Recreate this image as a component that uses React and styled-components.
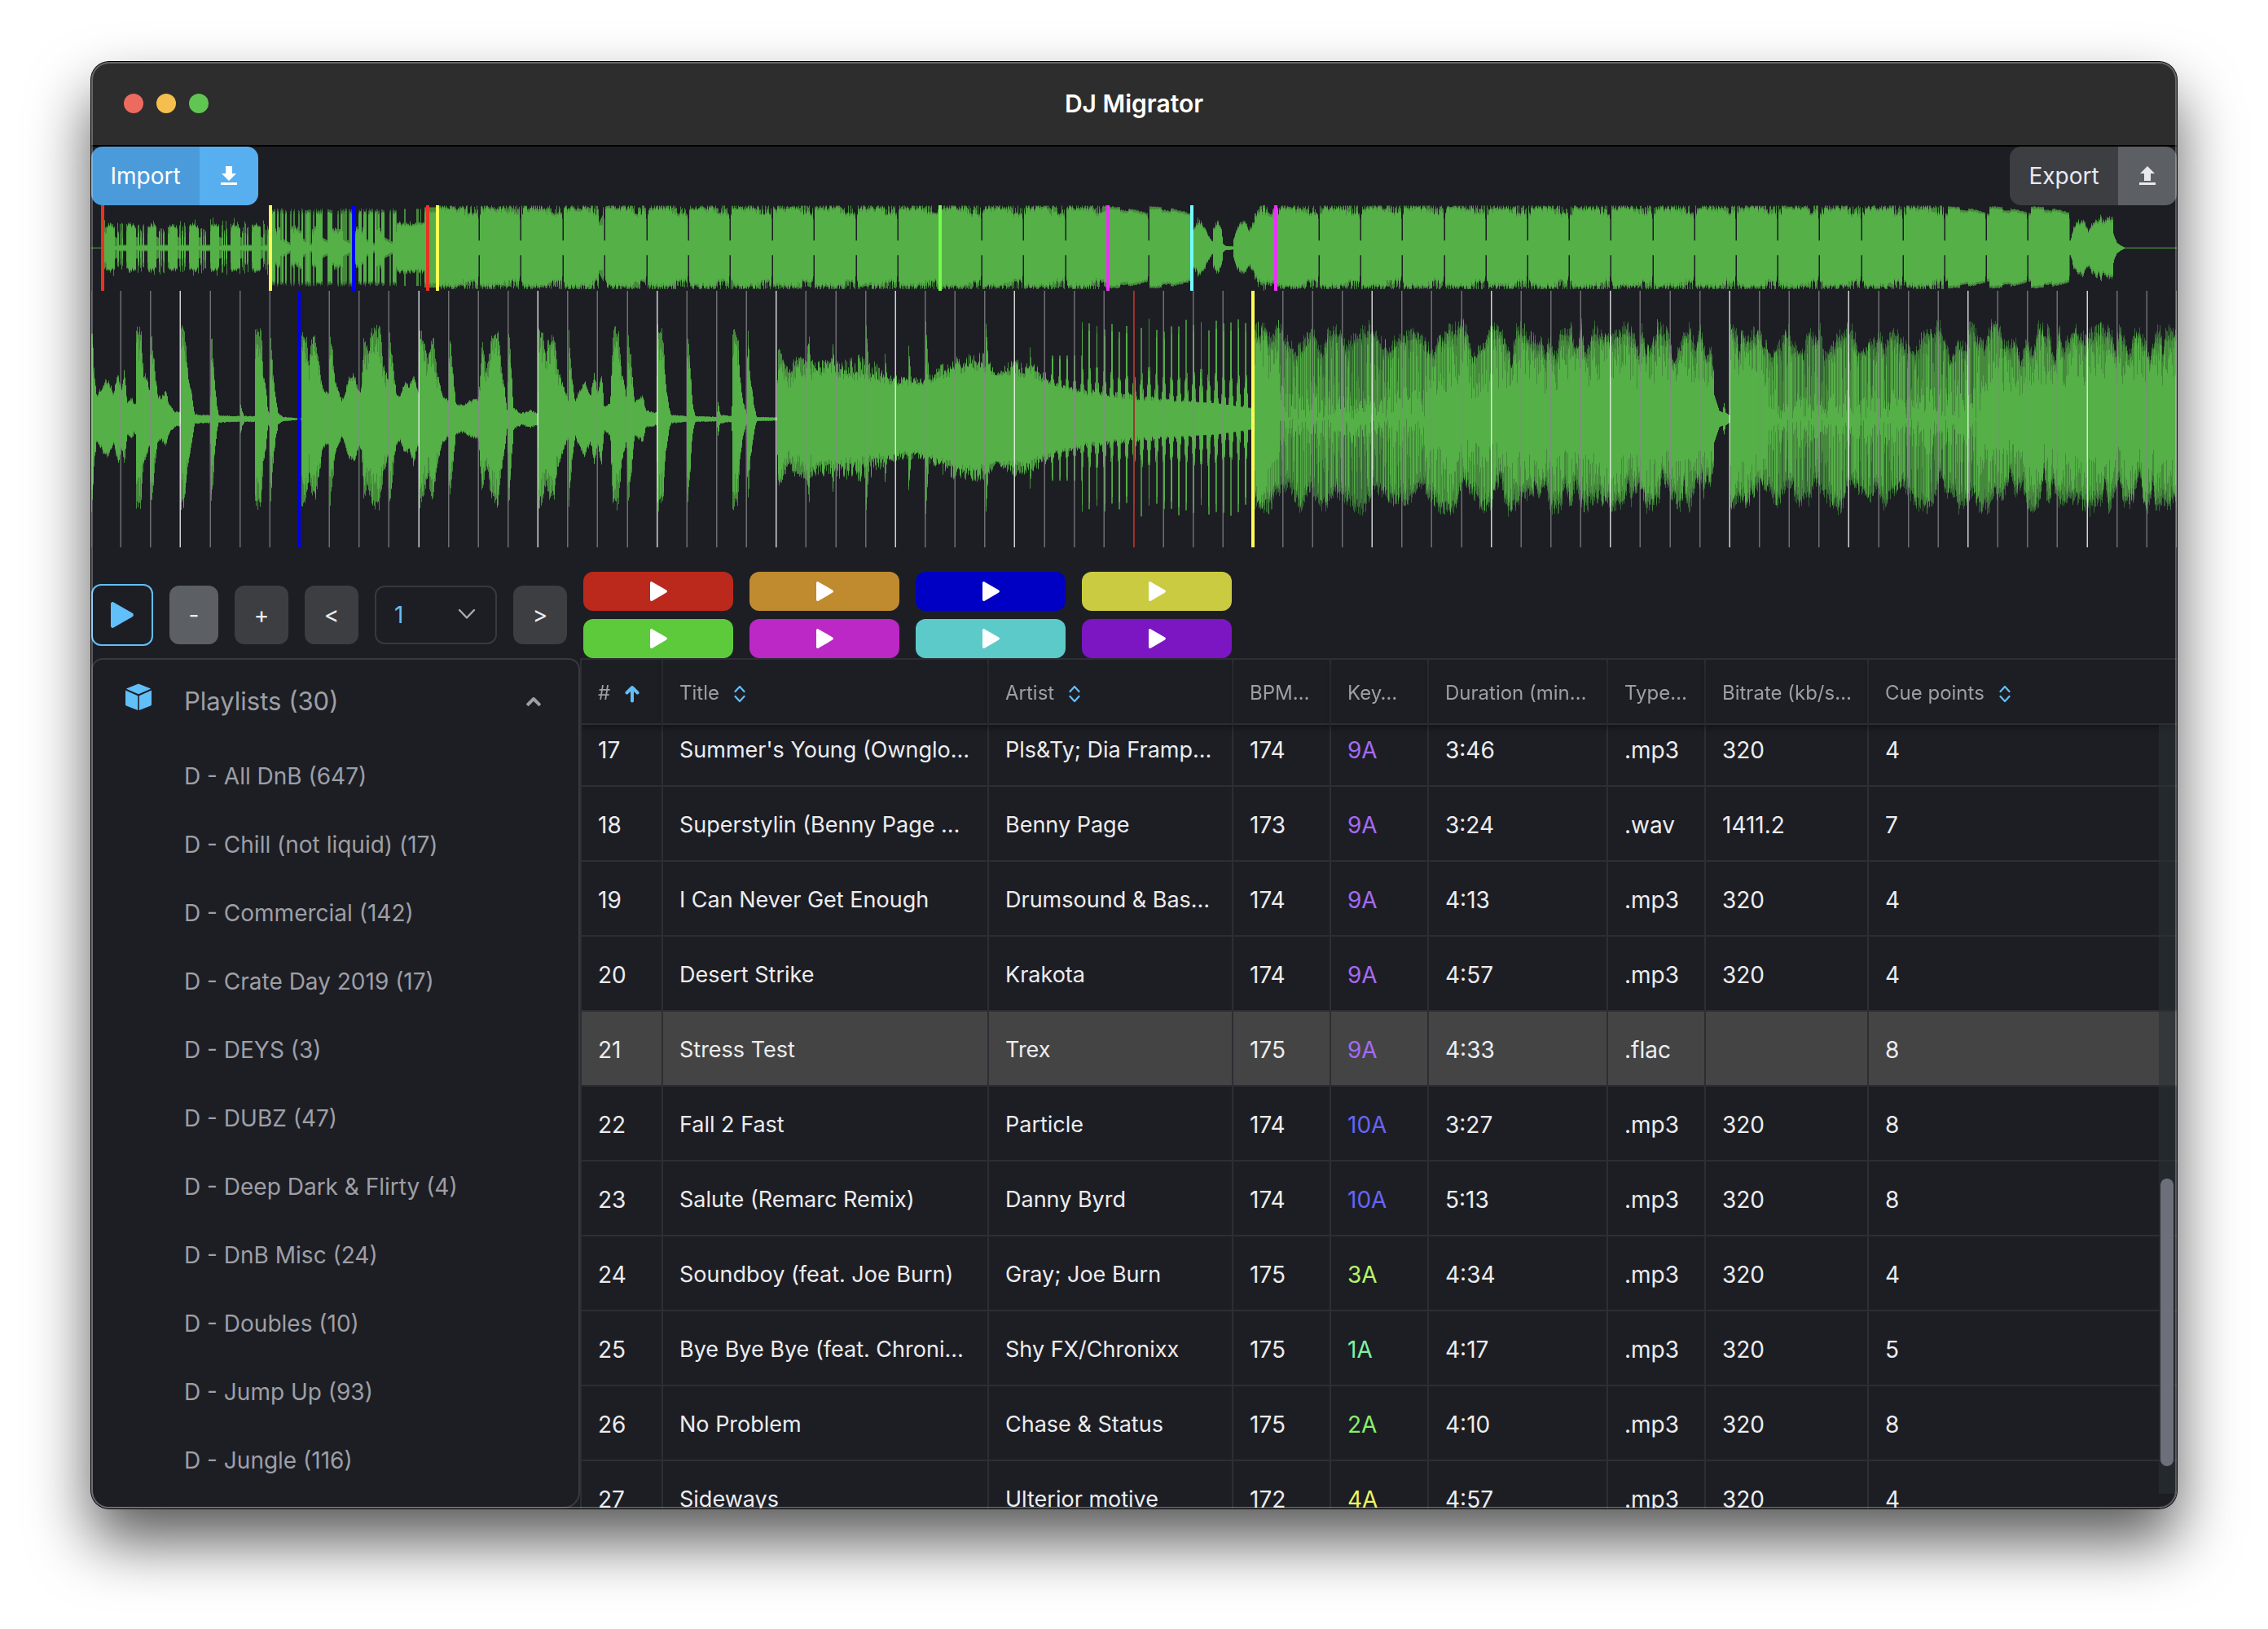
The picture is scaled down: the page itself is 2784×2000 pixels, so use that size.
import React, { useLayoutEffect, useRef } from "react";
import styled, { createGlobalStyle } from "styled-components";

const color = {
  bg: "#1d1e24",
  title: "#2d2d2d",
  line: "#2c2e33",
  panelLine: "#38393e",
  text: "#ececee",
  muted: "#9d9fa6",
  accent: "#61bffa",
  button: "#3d3e42",
  buttonLight: "#5c6065",
  wave: "#54b047",
  waveMid: "#46893d",
  waveDark: "#356636",
};

const GlobalStyle = createGlobalStyle`
  * { box-sizing: border-box; }
  body {
    margin: 0;
    background: #fff;
    font-family: Inter, "Liberation Sans", sans-serif;
    font-size: 28px;
    line-height: 40px;
    color: ${color.text};
  }
  button, select { font: inherit; }
`;

/* ---------- window ---------- */

const Page = styled.div`
  display: flex;
  height: 100vh;
  padding: 76px 112px 148px;
  overflow: hidden;
`;

const AppWindow = styled.div`
  position: relative;
  flex: 1;
  min-width: 0;
  display: flex;
  flex-direction: column;
  overflow: hidden;
  border-radius: 22px;
  background: ${color.bg};
`;

const Shadow = styled.div`
  flex: 1;
  min-width: 0;
  display: flex;
  border-radius: 22px;
  box-shadow: 0 0 0 1px #000, 0 40px 76px rgba(0, 0, 0, 0.65);
`;

const Rim = styled.div`
  position: absolute;
  inset: 0;
  z-index: 5;
  border-radius: inherit;
  pointer-events: none;
  box-shadow: inset 0 0 0 2px rgba(255, 255, 255, 0.28);
`;

const TitleBar = styled.header`
  display: grid;
  grid-template-columns: 1fr auto 1fr;
  align-items: center;
  height: 104px;
  flex: none;
  padding: 0 40px;
  background: ${color.title};
  border-bottom: 2px solid #000;
`;

const Lights = styled.div`
  display: flex;
  gap: 16px;
`;

const Light = styled.button`
  width: 24px;
  height: 24px;
  padding: 0;
  border: 0;
  border-radius: 50%;
  background: ${(p) => p.$tone};
`;

const Title = styled.h1`
  margin: 0;
  font-size: 30px;
  font-weight: 600;
  color: #fff;
`;

/* ---------- import / export ---------- */

const ActionRow = styled.div`
  display: flex;
  justify-content: space-between;
  flex: none;
`;

const SplitButton = styled.div`
  display: flex;
  height: 72px;
  border-radius: 14px;
  overflow: hidden;
  color: ${(p) => (p.$primary ? "#fff" : "#e8e9ef")};
  --main: ${(p) => (p.$primary ? "#4b9bdb" : color.button)};
  --side: ${(p) => (p.$primary ? "#58aff0" : color.buttonLight)};
`;

const SplitMain = styled.button`
  width: 133px;
  padding: 0;
  border: 0;
  color: inherit;
  background: var(--main);
`;

const SplitIcon = styled(SplitMain)`
  display: grid;
  place-items: center;
  width: 72px;
  background: var(--side);
`;

/* ---------- wave forms ---------- */

const WaveSvg = styled.svg`
  display: block;
  flex: none;
  width: 100%;
  height: ${(p) => p.$h}px;
`;

const WIDTH = 2560;
const BEAT = WIDTH / 70;

const noise = (n) => {
  const s = Math.sin(n * 127.1 + 311.7) * 43758.5453;
  return s - Math.floor(s);
};

const curve = (points) => (x) => {
  if (x <= points[0][0]) return points[0][1];
  for (let i = 1; i < points.length; i++) {
    const [x1, y1] = points[i];
    if (x <= x1) {
      const [x0, y0] = points[i - 1];
      return x1 === x0 ? y1 : y0 + ((y1 - y0) * (x - x0)) / (x1 - x0);
    }
  }
  return points[points.length - 1][1];
};

const pairs = (text, scale, shift) =>
  text
    .trim()
    .split(/\s+/)
    .map((p) => p.split(":").map(Number))
    .map(([x, y]) => [x / scale + shift, y]);

const INTRO = pairs(
  `22:119 25:80 28:50 32:30 50:50 57:50 68:34 78:60 85:38 91:63 97:22 107:28 112:18 115:22 116:120 127:115 132:60
  138:55 145:35 147:118 152:95 157:60 163:30 170:28 180:36 187:18 200:11 211:9 212:118 221:110 227:60 235:35 241:7
  275:5 276:120 280:90 284:50 289:18 293:5 338:4 339:22 343:10 348:4 370:4 371:117 384:113 388:60 394:40 398:10
  402:9 403:120 409:60 414:30 420:8 430:3 463:1 469:1 470:114 483:100 485:70 492:105 500:105 508:75 515:40 528:33
  531:115 536:90 541:50 555:26 560:28 570:52 583:58 592:36 597:38 603:105 612:88 623:120 638:115 645:70 655:52
  658:118 664:80 672:36 680:28 690:48 700:42 709:60 720:34 722:117 735:92 740:72 747:105 753:100 760:60 772:30
  785:24 786:118 794:60 800:20 815:18 830:24 848:26 855:90 858:100 865:60 876:105 890:118 897:70 905:36 910:10
  913:122 919:60 923:15 940:8 960:12 975:8 977:118 988:105 993:80 998:105 1010:105 1018:65 1028:45 1040:26
  1041:118 1048:60 1055:22 1062:35 1075:50 1088:32 1096:58 1103:32 1111:63 1117:16 1130:22 1136:118 1147:115
  1155:60 1165:28 1168:118 1176:70 1182:22 1200:30 1206:12 1229:9 1231:122 1243:110 1248:50 1256:15 1260:6 1293:4
  1295:118 1301:70 1306:20 1312:4 1358:3 1360:25 1365:6 1390:4 1391:120 1403:110 1408:50 1415:20 1422:8 1424:122
  1429:60 1437:20 1443:3 1486:2 1487:40 1490:100 1500:78 1515:60 1523:76 1550:78 1555:115 1558:76 1568:72`,
  1.742,
  -12
);

const DROP = [
  ...pairs(
    `938:110 945:118 960:122 970:98 995:125 1005:100 1030:80 1050:100 1060:122 1085:78 1100:122 1118:112 1135:88
    1150:100 1190:125 1203:112 1215:92 1225:85 1257:108 1290:108 1320:80 1345:105 1360:122 1387:125 1397:105 1408:70
    1435:100 1450:125 1470:110 1490:60 1500:125 1515:120 1530:105 1560:90`,
    1.742,
    888
  ),
  ...pairs(
    `8:60 18:125 35:120 40:100 70:98 80:60 95:98 100:90 112:70 120:125 145:120 152:75 160:90 168:126 178:75 197:122
    232:100 240:110 270:125 290:100 300:75 303:125 312:85 325:80 340:125 368:105 374:60 390:90 415:124 424:80 437:124
    452:65 460:84 465:60 468:30 480:10 488:8 490:22 494:8 504:4 505:122 520:110 524:60 530:125 545:98 565:118 575:100
    600:75 620:92 637:122 645:90 670:75 680:122 700:95 708:120 718:70 740:95 775:124 785:115 795:70 835:100 845:115
    855:80 875:118 890:98 920:75 945:112 965:118 978:126 992:100 1003:60 1020:95 1040:90 1047:125 1080:90 1095:125
    1115:120 1122:95 1150:98 1162:60 1175:95 1190:75 1203:125 1225:115 1240:60 1249:125 1258:75 1280:122 1310:100
    1320:110 1345:125 1370:110 1377:70 1385:122 1410:75 1424:123 1448:90 1455:60 1470:125 1478:125 1485:70 1492:118
    1516:112`,
    1.845,
    1738
  ),
];

const introAt = curve(INTRO);
const dropAt = curve(DROP);
const bedAt = curve([
  [888, 52], [950, 42], [1010, 38], [1080, 56], [1150, 48], [1180, 40],
  [1220, 28], [1280, 21], [1340, 20], [1380, 20], [1424, 12],
]);
const padAt = curve([
  [888, 72], [930, 76], [950, 80], [980, 54], [1020, 50], [1050, 74],
  [1100, 82], [1110, 55], [1130, 74], [1160, 66], [1180, 45], [1230, 36], [1300, 28], [1424, 14],
]);
const bodyAt = curve([
  [1426, 0.85], [1452, 0.75], [1464, 0.25], [1560, 0.2], [1610, 0.25], [1640, 0.5], [1720, 0.5],
  [1760, 0.7], [1980, 0.72], [2010, 0.85], [2050, 0.85], [2062, 0.3], [2120, 0.22], [2250, 0.25], [2310, 0.45],
  [2370, 0.65], [2560, 0.75],
]);
const PAD_HITS = [[910, 92], [951, 115], [1003, 90], [1024, 120], [1098, 117], [1152, 88], [974, 80]];

const detailColumn = (x, side) => {
  const r = noise(x * 1.7 + side * 977);
  const r2 = noise(x * 3.1 + side * 431 + 7);
  if (x < 888) {
    const e = introAt(x);
    const rough = e > 14 ? 0.14 : 0.25;
    const outer = e * (1 - rough * r);
    const inner = e > 60 ? outer * (0.65 + 0.35 * r2) : outer * (0.9 + 0.1 * r2);
    return { dark: 0, mid: outer, core: inner };
  }
  if (x < 1425) {
    const bed = bedAt(x);
    let outer = bed + (padAt(x) - bed) * (0.3 + 0.75 * r);
    for (const [hx, amp] of PAD_HITS) {
      const d = x - hx;
      if (d >= 0 && d < 4) outer = Math.max(outer, amp * (1 - d * 0.14));
    }
    if (x > 1170) {
      const step = BEAT / 4;
      const k = Math.round((x - 1170) / step);
      const d = Math.abs(x - 1170 - k * step);
      const peak = x < 1216 ? 78 : 106 + 18 * noise(k + 40 + side);
      if (d < 3) outer = Math.max(outer, d < 1 ? peak : bed + (peak - bed) * 0.42 * (1 - (d - 1) / 2));
    }
    return { dark: 0, mid: outer, core: bed + (outer - bed) * (r2 > 0.35 ? 0.9 : 0.3) };
  }
  const raw = dropAt(x);
  if (raw < 40) return { dark: 0, mid: raw, core: raw };
  const shifted = x > 1440 && (x < 1978 || x > 2020) ? dropAt(x + side * 13) : raw;
  const e = 124 * Math.pow(Math.max(shifted, 50) / 124, 0.7);
  const body = bodyAt(x);
  const outer = e * (1 - 0.17 * r);
  const bar = noise(x * 5.3);
  const loose = body < 0.48;
  const core =
    bar < (loose ? 0.34 : 0.42) ? outer * (0.72 + 0.28 * r2) : outer * body * (loose ? 1.5 * r2 : 0.6 + 0.7 * r2);
  const mid = loose && bar > 0.72 ? outer * (0.1 + 0.6 * r) : outer * (0.86 + 0.14 * r2);
  return { dark: outer, mid, core: Math.min(core, mid) };
};

const OV_EDGES = [];
for (let k = 0; k < 18; k++) OV_EDGES.push(Math.round(476 + k * 51.4));
for (let k = 0; k < 19; k++) OV_EDGES.push(Math.round(1507 + k * 51.2));

const breakAt = curve(
  pairs(
    `937:24 945:24 962:36 980:30 1000:15 1012:9 1014:9 1016:24 1035:33 1048:22 1053:6 1060:3 1090:2 1092:12 1105:26 1130:33
    1150:24 1165:33 1172:42 1185:47 1200:52 1240:46`,
    3,
    1038
  )
);
const tailAt = curve(
  pairs(
    `722:3 725:10 735:27 750:33 770:36 788:22 800:30 820:38 830:34 836:44 840:34 880:40 882:20 886:14 895:7 905:4 920:1`,
    3,
    2188
  )
);

const overviewColumn = (x, side) => {
  const r = noise(x * 2.3 + side * 613);
  const r2 = noise(x * 4.9 + side * 211 + 3);
  const flat = { dark: 0, mid: 0.5, core: 0.5 };
  if (x < 16 || x > 2495) return flat;
  if (x < 219) {
    const t = ((x - 17) % 25.6) / 25.6;
    if (t < 0.46) {
      const outer = 32 - 12 * Math.abs(t - 0.2) - 5 * r;
      return { dark: 0, mid: outer + (r2 > 0.9 ? 6 : 0), core: outer * (t < 0.05 ? 0.7 : 0.94) };
    }
    const spike = (t > 0.55 && t < 0.63) || (t > 0.76 && t < 0.84) || (t > 0.67 && t < 0.72);
    return spike
      ? { dark: 0, mid: 20 + 14 * r, core: 12 + 10 * r2 }
      : { dark: 0, mid: t < 0.55 ? 14 - 18 * (t - 0.46) : 4, core: 2.5 };
  }
  if (x < 375) {
    const t = ((x - 219) % 25.6) / 25.6;
    const bar = noise(Math.floor(x / 2) * 7.7);
    const inner = t < 0.5 ? 25 - 8 * r : 14 * (1 - t) + 3;
    if (bar < 0.6) return { dark: 49 - 4 * r, mid: 46 - 5 * r, core: bar < 0.36 ? 45 - 4 * r2 : inner };
    return { dark: 0, mid: inner + 3, core: inner };
  }
  if (x < 409) {
    const base = 33 - 5 * r;
    return { dark: 0, mid: noise(x * 9.1) > 0.82 ? 48 : base, core: base - 2 };
  }
  if (x < 427) return { dark: 0, mid: 50, core: 43 + 4 * r };
  if (x > 1350 && x < 1453) {
    const e = breakAt(x) * (0.86 + 0.22 * r);
    return { dark: 0, mid: e, core: e * 0.92 };
  }
  if (x > 2429) {
    const e = tailAt(x) * (0.88 + 0.18 * r);
    return { dark: 0, mid: e, core: e * 0.92 };
  }
  const edge = OV_EDGES.find((v) => x === v || x === v - 1);
  if (edge) return x < edge ? { dark: 36, mid: 9, core: 9 } : { dark: 0, mid: 9, core: 9 };
  if (x > 622 && x < 628) return { dark: 0, mid: 30 + (x - 622) * 2, core: 28 };
  const start = x < 1350 ? 476 - 51.4 : 1507 - 51.2;
  const index = Math.floor((x - start) / 51.4);
  const t = (x - start) / 51.4 - index;
  const smooth = (x > 1248 && x < 1350) || x > 2275;
  if (smooth) {
    const shape = 50 - 9 * t * t - (t > 0.3 && t < 0.5 ? 3 : 0);
    return { dark: 0, mid: shape + r * 1.5, core: shape - 1 - 2 * r2 };
  }
  const thin = (t > 0.7 || t < 0.04) && r2 < 0.4;
  const mid = thin ? 41 + 3 * r : Math.min(52, 47 + 7 * r);
  return { dark: 0, mid, core: mid - 1 - (t > 0.6 ? 7 : 3) * r2 };
};

const buildLayers = (column, centre) => {
  const out = { dark: "", mid: "", core: "" };
  for (let x = 0; x < WIDTH; x++) {
    const up = column(x, 0);
    const down = column(x, 1);
    for (const key of ["dark", "mid", "core"]) {
      const a = up[key];
      const b = down[key];
      if (a > 0 || b > 0) {
        out[key] += `M${x + 0.5} ${(centre - a).toFixed(1)}V${(centre + b * 0.97).toFixed(1)}`;
      }
    }
  }
  return out;
};

const overviewLayers = buildLayers(overviewColumn, 52.5);
const detailLayers = buildLayers(detailColumn, 157.5);

function Layers({ layers }) {
  return (
    <g fill="none" strokeWidth="1">
      <path d={layers.dark} stroke={color.waveDark} />
      <path d={layers.mid} stroke={color.waveMid} />
      <path d={layers.core} stroke={color.wave} />
    </g>
  );
}

const MARKERS = [
  [14, "#ea3223"], [220, "#fffd54"], [322, "#0000f5"], [413, "#ea3223"], [425, "#fffd54"],
  [1042, "#75fb4c"], [1248, "#ea33f7"], [1351, "#73fbfd"], [1454, "#ea33f7"],
];

function Overview() {
  return (
    <WaveSvg $h={105} viewBox="0 0 2560 105" preserveAspectRatio="none" role="img" aria-label="Track overview">
      <Layers layers={overviewLayers} />
      {MARKERS.map(([x, fill]) => (
        <rect key={x} x={x - 2} y="0" width="4" height="105" fill={fill} />
      ))}
    </WaveSvg>
  );
}

function Detail() {
  return (
    <WaveSvg $h={315} viewBox="0 0 2560 315" preserveAspectRatio="none" role="img" aria-label="Wave form">
      <Layers layers={detailLayers} />
      {Array.from({ length: 71 }, (_, i) => {
        const bar = i % 4 === 3;
        return (
          <rect
            key={i}
            x={Math.round(i * BEAT * 2) / 2 - 1}
            width="1.5"
            height="315"
            fill={bar ? "#f2f2f2" : "#88888c"}
            opacity={bar ? 0.85 : 0.75}
          />
        );
      })}
      <rect x="1279" width="2" height="315" fill="#96281f" opacity="0.9" />
      <rect x="253" width="4" height="315" fill="#0000f5" />
      <rect x="1424" width="4" height="315" fill="#fffd54" />
    </WaveSvg>
  );
}

/* ---------- transport ---------- */

const Transport = styled.div`
  display: flex;
  align-items: center;
  gap: 20px;
  flex: none;
  padding-top: 30px;
`;

const PlayButton = styled.button`
  display: grid;
  place-items: center;
  width: 76px;
  height: 76px;
  padding: 0;
  border: 2px solid ${color.accent};
  border-radius: 12px;
  background: none;
  color: ${color.accent};
`;

const StepButton = styled.button`
  width: ${(p) => (p.$light ? 60 : 66)}px;
  height: 72px;
  padding: 0;
  border: 0;
  border-radius: 12px;
  color: ${color.text};
  background: ${(p) => (p.$light ? color.buttonLight : color.button)};
`;

const SelectBox = styled.label`
  position: relative;
  display: block;
  width: 150px;
  height: 72px;

  select {
    width: 100%;
    height: 100%;
    padding: 0 22px;
    appearance: none;
    border: 2px solid ${color.panelLine};
    border-radius: 12px;
    background: none;
    color: ${color.accent};
  }

  svg {
    position: absolute;
    right: 26px;
    top: 28px;
    pointer-events: none;
  }
`;

const CueGrid = styled.div`
  display: grid;
  grid-template-columns: repeat(4, 184px);
  gap: 10px 20px;
`;

const CueButton = styled.button`
  display: grid;
  place-items: center;
  height: 48px;
  padding: 0;
  border: 0;
  border-radius: 12px;
  color: #fff;
  background: ${(p) => p.$tone};
`;

/* ---------- library ---------- */

const Library = styled.main`
  display: flex;
  flex: 1;
  min-height: 0;
`;

const Sidebar = styled.nav`
  flex: none;
  width: 600px;
  border: 2px solid ${color.panelLine};
  border-radius: 14px 14px 20px 20px;
  overflow: hidden;
  color: ${color.muted};
`;

const GroupHeader = styled.button`
  display: flex;
  align-items: flex-start;
  width: 100%;
  padding: 29px 46px 27px 39px;
  border: 0;
  background: none;
  color: inherit;
  font-size: 31px;
  line-height: 44px;
  text-align: left;

  span {
    flex: 1;
    padding-left: 39px;
  }
`;

const PlaylistList = styled.ul`
  margin: 0;
  padding: 1px 0 0 112px;
  list-style: none;
`;

const PlaylistLink = styled.a`
  display: block;
  line-height: 84px;
  color: inherit;
  text-decoration: none;
`;

const TablePane = styled.section`
  position: relative;
  flex: 1;
  min-width: 0;
  border: solid ${color.line};
  border-width: 2px 0 0 2px;
`;

const TableScroll = styled.div`
  height: 100%;
  overflow: hidden;
`;

const Table = styled.table`
  width: 100%;
  table-layout: fixed;
  border-spacing: 0;
`;

const HeadCell = styled.th`
  position: sticky;
  top: 0;
  z-index: 1;
  height: 80px;
  padding: 3px 0 0 20px;
  border-right: 2px solid ${color.line};
  border-bottom: 2px solid ${color.line};
  background: ${color.bg};
  box-shadow: 0 4px 6px rgba(0, 0, 0, 0.3);
  color: ${color.muted};
  font-size: 24px;
  font-weight: 400;
  text-align: left;
  white-space: nowrap;

  &:last-child {
    border-right: 0;
  }
`;

const HeadLabel = styled.span`
  display: flex;
  align-items: center;
  gap: 18px;

  svg {
    margin-top: 2px;
  }
`;

const Row = styled.tr`
  background: ${(p) => (p.$selected ? "#444444" : "none")};
`;

const Cell = styled.td`
  height: 92px;
  padding: 3px 0 0 20px;
  border-right: 2px solid ${color.line};
  border-bottom: 2px solid ${color.line};
  color: ${(p) => p.$tone || color.text};
  font-size: ${(p) => (p.$name ? 27 : 28)}px;
  white-space: nowrap;

  &:last-child {
    border-right: 0;
  }
`;

const Track = styled.div`
  position: absolute;
  top: 80px;
  right: 2px;
  bottom: 18px;
  z-index: 2;
  width: 20px;
  padding: 0 2px;
  display: flex;
  flex-direction: column;
  justify-content: flex-end;
  background: rgba(42, 48, 52, 0.6);
`;

const Thumb = styled.div`
  height: 353px;
  margin-bottom: 34px;
  border-radius: 8px;
  background: rgba(128, 130, 142, 0.8);
`;

/* ---------- icons ---------- */

const PlayIcon = ({ w, h }) => (
  <svg width={w} height={h} viewBox="0 0 28 32" aria-hidden="true">
    <path
      d="M0 2.4C0 .5 1.9-.5 3.5.5L26.2 13.6c2.2 1.3 2.2 3.5 0 4.8L3.5 31.5C1.9 32.5 0 31.5 0 29.6Z"
      fill="currentColor"
    />
  </svg>
);

const DownloadIcon = () => (
  <svg width="20" height="24" viewBox="0 0 20 24" aria-hidden="true">
    <path d="M6 0h8v9h5L10 18 1 9h5ZM0 20h20v3H0Z" fill="currentColor" />
  </svg>
);

const UploadIcon = () => (
  <svg width="20" height="24" viewBox="0 0 20 24" aria-hidden="true">
    <path d="M10 0l9 9h-5v9H6V9H1ZM0 20h20v3H0Z" fill="currentColor" />
  </svg>
);

const ChevronDown = () => (
  <svg width="22" height="14" viewBox="0 0 22 14" fill="none" stroke="#a9abb1" strokeWidth="2.4" aria-hidden="true">
    <path d="M2 2l9 9.5L20 2" strokeLinecap="round" strokeLinejoin="round" />
  </svg>
);

const Chevron = styled.svg`
  align-self: center;
`;

const ChevronUp = () => (
  <Chevron width="18" height="12" viewBox="0 0 18 12" fill="none" stroke="currentColor" strokeWidth="4" aria-hidden="true">
    <path d="M2.500 9.500L9 3l6.500 6.500" strokeLinejoin="round" strokeLinecap="square" />
  </Chevron>
);

const CubeIcon = () => (
  <svg width="34" height="34" viewBox="0 0 34 34" fill={color.accent} aria-hidden="true">
    <path d="M17 .5L31.500 6.200Q32 6.600 31.500 7L17 13.200 2.500 7Q2 6.600 2.500 6.200Z" />
    <path d="M1 8.600l15.200 6.600V33L2 27.400Q1 27 1 26Z" />
    <path d="M33 8.600l-15.200 6.600V33L32 27.400Q33 27 33 26Z" />
  </svg>
);

const SortIcon = () => (
  <svg width="14" height="22" viewBox="0 0 14 22" fill="none" stroke={color.accent} strokeWidth="2.2" aria-hidden="true">
    <path d="M1.500 8L7 2l5.500 6M1.500 14L7 20l5.500-6" strokeLinecap="round" strokeLinejoin="round" />
  </svg>
);

const SortedIcon = () => (
  <svg width="18" height="22" viewBox="0 0 18 22" fill="none" stroke={color.accent} strokeWidth="4" aria-hidden="true">
    <path d="M9 19.500V4M2.500 9.500L9 3l6.500 6.500" strokeLinecap="round" strokeLinejoin="round" />
  </svg>
);

/* ---------- data ---------- */

const CUES = ["#ba291c", "#c08a2f", "#0000c4", "#cbcb41", "#5dca3c", "#bb28c5", "#5dcaca", "#7b16c2"];

const PLAYLISTS = [
  ["All DnB", 647], ["Chill (not liquid)", 17], ["Commercial", 142], ["Crate Day 2019", 17], ["DEYS", 3], ["DUBZ", 47],
  ["Deep Dark & Flirty", 4], ["DnB Misc", 24], ["Doubles", 10], ["Jump Up", 93], ["Jungle", 116],
];

const COLUMNS = [
  ["#", 100, "asc"], ["Title", 400, "sort"], ["Artist", 300, "sort"], ["BPM…", 120], ["Key…", 120],
  ["Duration (min…", 220], ["Type…", 120], ["Bitrate (kb/s…", 200], ["Cue points", null, "sort"],
];

const KEY_TONES = {
  "9A": "#a46af3", "10A": "#6764f4", "3A": "#b7f26b", "1A": "#7ff2a4", "2A": "#86f06b", "4A": "#f1f266",
};

const TRACKS = [
  [17, "Summer's Young (Ownglo…", "Pls&Ty; Dia Framp…", 174, "9A", "3:46", ".mp3", "320", 4],
  [18, "Superstylin (Benny Page …", "Benny Page", 173, "9A", "3:24", ".wav", "1411.2", 7],
  [19, "I Can Never Get Enough", "Drumsound & Bas…", 174, "9A", "4:13", ".mp3", "320", 4],
  [20, "Desert Strike", "Krakota", 174, "9A", "4:57", ".mp3", "320", 4],
  [21, "Stress Test", "Trex", 175, "9A", "4:33", ".flac", "", 8],
  [22, "Fall 2 Fast", "Particle", 174, "10A", "3:27", ".mp3", "320", 8],
  [23, "Salute (Remarc Remix)", "Danny Byrd", 174, "10A", "5:13", ".mp3", "320", 8],
  [24, "Soundboy (feat. Joe Burn)", "Gray; Joe Burn", 175, "3A", "4:34", ".mp3", "320", 4],
  [25, "Bye Bye Bye (feat. Chroni…", "Shy FX/Chronixx", 175, "1A", "4:17", ".mp3", "320", 5],
  [26, "No Problem", "Chase & Status", 175, "2A", "4:10", ".mp3", "320", 8],
  [27, "Sideways", "Ulterior motive", 172, "4A", "4:57", ".mp3", "320", 4],
];

function TrackTable() {
  const scroller = useRef(null);
  useLayoutEffect(() => {
    scroller.current.scrollTop = 16;
  }, []);

  return (
    <TablePane>
      <TableScroll ref={scroller}>
        <Table>
          <colgroup>
            {COLUMNS.map(([label, width]) => (
              <col key={label} width={width || undefined} />
            ))}
          </colgroup>
          <thead>
            <tr>
              {COLUMNS.map(([label, , sort]) => (
                <HeadCell key={label} scope="col">
                  <HeadLabel>
                    {label}
                    {sort === "asc" && <SortedIcon />}
                    {sort === "sort" && <SortIcon />}
                  </HeadLabel>
                </HeadCell>
              ))}
            </tr>
          </thead>
          <tbody>
            {TRACKS.map((track) => (
              <Row key={track[0]} $selected={track[0] === 21}>
                {track.map((value, i) => (
                  <Cell key={i} $name={i === 1 || i === 2} $tone={i === 4 ? KEY_TONES[value] : undefined}>
                    {value}
                  </Cell>
                ))}
              </Row>
            ))}
          </tbody>
        </Table>
      </TableScroll>
      <Track>
        <Thumb />
      </Track>
    </TablePane>
  );
}

export default function App() {
  return (
    <Page>
      <GlobalStyle />
      <Shadow>
        <AppWindow>
          <TitleBar>
            <Lights>
              <Light $tone="#ec6a5e" aria-label="Close" />
              <Light $tone="#f4bf4f" aria-label="Minimize" />
              <Light $tone="#61c554" aria-label="Zoom" />
            </Lights>
            <Title>DJ Migrator</Title>
          </TitleBar>
          <ActionRow>
            <SplitButton $primary>
              <SplitMain>Import</SplitMain>
              <SplitIcon aria-label="Import file">
                <DownloadIcon />
              </SplitIcon>
            </SplitButton>
            <SplitButton>
              <SplitMain>Export</SplitMain>
              <SplitIcon aria-label="Export file">
                <UploadIcon />
              </SplitIcon>
            </SplitButton>
          </ActionRow>
          <Overview />
          <Detail />
          <Transport>
            <PlayButton aria-label="Play">
              <PlayIcon w={28} h={32} />
            </PlayButton>
            <StepButton $light>-</StepButton>
            <StepButton>+</StepButton>
            <StepButton>&lt;</StepButton>
            <SelectBox>
              <select aria-label="Beats" defaultValue="1">
                <option>1</option>
                <option>2</option>
                <option>4</option>
              </select>
              <ChevronDown />
            </SelectBox>
            <StepButton>&gt;</StepButton>
            <CueGrid>
              {CUES.map((tone, i) => (
                <CueButton key={tone} $tone={tone} aria-label={`Cue ${i + 1}`}>
                  <PlayIcon w={21} h={24} />
                </CueButton>
              ))}
            </CueGrid>
          </Transport>
          <Library>
            <Sidebar>
              <GroupHeader aria-expanded="true">
                <CubeIcon />
                <span>Playlists (30)</span>
                <ChevronUp />
              </GroupHeader>
              <PlaylistList>
                {PLAYLISTS.map(([name, count]) => (
                  <li key={name}>
                    <PlaylistLink href="#">{`D - ${name} (${count})`}</PlaylistLink>
                  </li>
                ))}
              </PlaylistList>
            </Sidebar>
            <TrackTable />
          </Library>
          <Rim />
        </AppWindow>
      </Shadow>
    </Page>
  );
}
